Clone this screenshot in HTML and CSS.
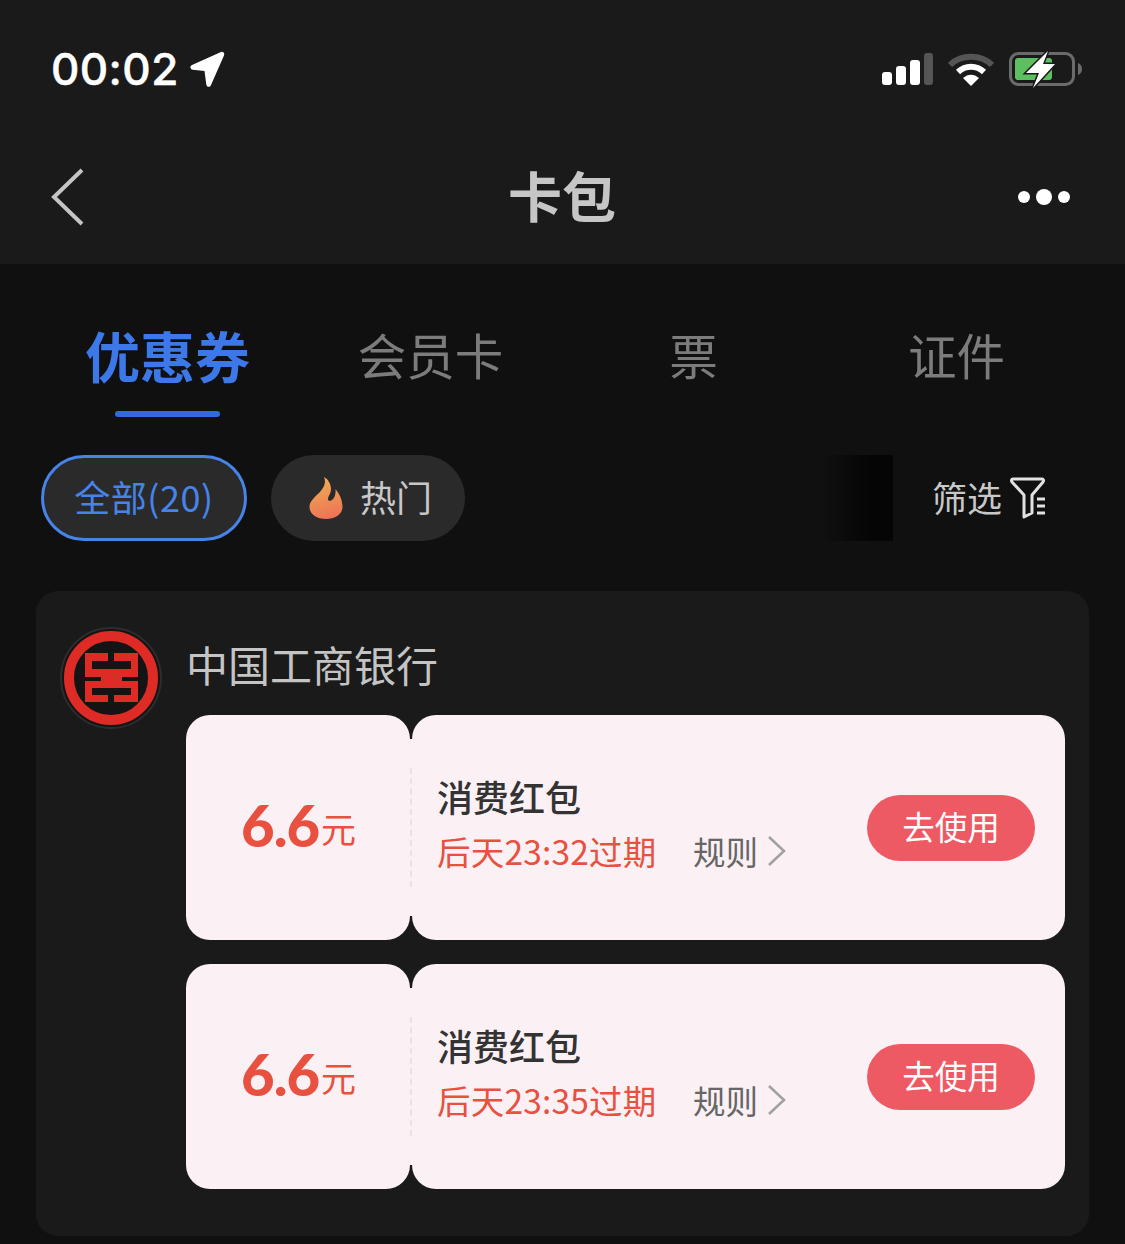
FILE: index.html
```html
<!DOCTYPE html>
<html lang="zh-CN">
<head>
    <meta charset="UTF-8">
    <meta name="viewport" content="width=device-width, initial-scale=1.0">
    <title>卡包</title>
    <link rel="stylesheet" href="styles.css">
</head>
<body>

<header class="top">
    <div class="status">
        <div class="status-left">
            <span class="time">00:02</span>
            <svg class="loc" width="36" height="36" viewBox="0 0 36 36"><path d="M32 1 3 14c-2.500 1.200-2 4.500.8 4.800L15.500 20l1.800 13.500c.4 2.700 3.600 3.100 4.600.8L35 4.500C35.900 2.200 34 .1 32 1z" fill="#fff"/></svg>
        </div>
        <div class="status-right">
            <svg width="52" height="34" viewBox="0 0 52 34">
                <rect x="1" y="20" width="10" height="13" rx="3" fill="#fff"/>
                <rect x="15" y="14" width="10" height="19" rx="3" fill="#fff"/>
                <rect x="29" y="8" width="10" height="25" rx="3" fill="#fff"/>
                <rect x="43" y="1" width="9" height="32" rx="3" fill="#555"/>
            </svg>
            <svg width="46" height="34" viewBox="0 0 46 34">
                <path d="M2 13C13 2 33 2 44 13" fill="none" stroke="#555" stroke-width="6"/>
                <path d="M10 20c7.500-7 18.500-7 26 0" fill="none" stroke="#fff" stroke-width="6"/>
                <path d="M15 26c5-4.500 11-4.500 16 0l-8 8z" fill="#fff"/>
            </svg>
            <svg width="74" height="38" viewBox="0 0 74 38">
                <rect x="1.500" y="3.500" width="63" height="31" rx="8" fill="none" stroke="#6b6b6b" stroke-width="3"/>
                <rect x="6" y="8" width="37" height="22" rx="3" fill="#5cc060"/>
                <path d="M69 13c3 1 4 3.500 4 6s-1 5-4 6z" fill="#6b6b6b"/>
                <path class="bolt" d="M39 1 17 23h13l-6 15 22-24H34z"/>
            </svg>
        </div>
    </div>
    <nav class="nav">
        <svg width="36" height="60" viewBox="0 0 36 60"><path d="M32 3 4 30l28 27" fill="none" stroke="#c4c4c4" stroke-width="4"/></svg>
        <h1 class="nav-title">卡包</h1>
        <div class="more"><i></i><i class="mid"></i><i></i></div>
    </nav>
</header>

<div class="tabs">
    <div class="tab active">优惠券</div>
    <div class="tab">会员卡</div>
    <div class="tab">票</div>
    <div class="tab">证件</div>
</div>

<div class="filters">
    <div class="pill selected">全部(20)</div>
    <div class="pill hot">
        <svg width="34" height="44" viewBox="0 0 34 44">
            <defs><linearGradient id="flame" x1="0.300" y1="0" x2="0.500" y2="1"><stop offset="0" stop-color="#eeb055"/><stop offset="1" stop-color="#ee7355"/></linearGradient></defs>
            <path d="M15 1c2 5 1 9-4 15C6 21 .5 25 .5 31c0 7 7 12 16.500 12s16.500-5 16.500-12c0-7-3-13-7-18 .5 5-1 9-3.500 11-2 1.500-4 1-4-1 0-3 3-5 3-10C22 8 19 3 15 1z" fill="url(#flame)"/>
        </svg>
        <span>热门</span>
    </div>
    <div class="fade"></div>
    <div class="screen">
        <span>筛选</span>
        <svg width="38" height="42" viewBox="0 0 38 42">
            <path d="M4 2h29c1.500 0 2 1.500 1 3L23 18v18l-8 4V18L3 5C2 3.500 2.500 2 4 2z" fill="none" stroke="#e2e2e2" stroke-width="3" stroke-linejoin="round"/>
            <path d="M28 22h8M28 29h8M28 36h8" stroke="#e2e2e2" stroke-width="3"/>
        </svg>
    </div>
</div>

<section class="bank">
    <svg width="102" height="102" viewBox="0 0 102 102">
        <circle cx="51" cy="51" r="50" fill="#141414" stroke="#2d2d2d" stroke-width="2"/>
        <circle cx="51" cy="51" r="42" fill="none" stroke="#df2b26" stroke-width="10"/>
        <g fill="#df2b26">
            <rect x="25" y="26" width="23" height="8"/>
            <rect x="54" y="26" width="24" height="8"/>
            <rect x="25" y="26" width="7" height="24"/>
            <rect x="71" y="26" width="7" height="24"/>
            <rect x="25" y="42" width="53" height="8"/>
            <rect x="41" y="42" width="21" height="19"/>
            <rect x="25" y="54" width="53" height="7"/>
            <rect x="25" y="54" width="7" height="21"/>
            <rect x="71" y="54" width="7" height="21"/>
            <rect x="25" y="68" width="23" height="7"/>
            <rect x="54" y="68" width="24" height="7"/>
        </g>
        <path d="M25 50.500h16v3H25zM62 50.500h16v3H62z" fill="#141414"/>
    </svg>
    <div class="bank-body">
        <div class="bank-name">中国工商银行</div>

        <div class="ticket">
            <div class="stub"><b>6.6</b><span>元</span></div>
            <div class="joint"></div>
            <div class="main">
                <div class="info">
                    <div class="name">消费红包</div>
                    <div class="line">
                        <span class="expire">后天23:32过期</span>
                        <span class="rule">规则</span>
                        <svg width="20" height="32" viewBox="0 0 20 32"><path d="M2 2l15 14L2 30" fill="none" stroke="#a0a0a0" stroke-width="2.500"/></svg>
                    </div>
                </div>
                <div class="use">去使用</div>
            </div>
        </div>

        <div class="ticket">
            <div class="stub"><b>6.6</b><span>元</span></div>
            <div class="joint"></div>
            <div class="main">
                <div class="info">
                    <div class="name">消费红包</div>
                    <div class="line">
                        <span class="expire">后天23:35过期</span>
                        <span class="rule">规则</span>
                        <svg width="20" height="32" viewBox="0 0 20 32"><path d="M2 2l15 14L2 30" fill="none" stroke="#a0a0a0" stroke-width="2.500"/></svg>
                    </div>
                </div>
                <div class="use">去使用</div>
            </div>
        </div>
    </div>
</section>

</body>
</html>
```

FILE: styles.css
```css
body {
    margin: 0;
    height: 1244px;
    overflow: hidden;
    background: #101010;
    font-family: "Noto Sans CJK SC", "Liberation Sans", sans-serif;
    color: #fff;
}
svg { display: block; flex: none; }

.top {
    height: 264px;
    background: #1a1a1a;
}
.status {
    height: 130px;
    padding: 8px 42px 0 51px;
    box-sizing: border-box;
    display: flex;
    justify-content: space-between;
    align-items: center;
}
.status-left { display: flex; align-items: center; gap: 10px; }
.time {
    font-family: Inter, sans-serif;
    font-size: 44px;
    font-weight: 500;
    letter-spacing: 0.4px;
    -webkit-text-stroke: 0.5px #fff;
}
.status-right { display: flex; align-items: center; gap: 15px; }
.bolt {
    fill: #fff;
    stroke: #1a1a1a;
    stroke-width: 3;
    paint-order: stroke;
}

.nav {
    height: 134px;
    padding: 0 55px 0 50px;
    display: grid;
    grid-template-columns: 1fr auto 1fr;
    align-items: center;
}
.nav-title {
    margin: 0 0 4px 4px;
    font-size: 54px;
    line-height: 70px;
    font-weight: 700;
    color: #c6c6c6;
}
.more { display: flex; align-items: center; justify-content: flex-end; gap: 6px; }
.more i { width: 12px; height: 12px; border-radius: 50%; background: #fff; }
.more i.mid { width: 16px; height: 16px; }

.tabs {
    display: grid;
    grid-template-columns: repeat(4, 263px);
    margin: 0 36px;
    padding-top: 53px;
    height: 100px;
}
.tab {
    position: relative;
    text-align: center;
    font-size: 48.500px;
    line-height: 74px;
    color: #7c7c7c;
}
.tab.active {
    font-size: 55px;
    font-weight: 700;
    color: #3d78e8;
}
.tab.active::after {
    content: "";
    position: absolute;
    left: 79px;
    top: 94px;
    width: 105px;
    height: 6px;
    border-radius: 3px;
    background: #2f6ae0;
}

.filters {
    display: flex;
    align-items: center;
    margin: 38px 0 50px 41px;
    height: 86px;
}
.pill {
    height: 86px;
    box-sizing: border-box;
    border-radius: 43px;
    background: #2a2a2a;
    display: flex;
    align-items: center;
    font-size: 36px;
    color: #c8c8c8;
}
.pill.selected {
    width: 206px;
    padding-bottom: 4px;
    justify-content: center;
    border: 3px solid #4684ea;
    color: #4684ea;
    letter-spacing: 0.5px;
}
.pill.hot {
    width: 194px;
    margin-left: 24px;
    padding-left: 38px;
    gap: 17px;
}
.pill.hot span { margin-bottom: 4px; }
.fade {
    width: 73px;
    height: 86px;
    margin-left: 355px;
    background: linear-gradient(to right, #101010, #050505 70%);
}
.screen {
    display: flex;
    align-items: center;
    gap: 7px;
    margin-left: 39px;
    font-size: 35px;
    color: #c8c8c8;
}
.screen span { margin-bottom: 4px; }

.bank {
    margin: 0 36px;
    height: 645px;
    box-sizing: border-box;
    padding: 36px 24px 47px;
    border-radius: 22px;
    background: #1a1a1a;
    display: flex;
    gap: 24px;
}
.bank-body { flex: 1; min-width: 0; }
.bank-name {
    height: 88px;
    font-size: 42px;
    line-height: 74px;
    color: #c4c4c4;
}

.ticket {
    display: flex;
    height: 225px;
    margin-bottom: 24px;
}
.stub {
    width: 224px;
    box-sizing: border-box;
    padding: 0 0 6px 55px;
    border-radius: 24px;
    background: #fbf1f5;
    color: #e8503f;
    display: flex;
    align-items: center;
}
.stub b {
    font-family: Lato, sans-serif;
    font-size: 58px;
    font-weight: 900;
    letter-spacing: -1px;
}
.stub span { margin: 6px 0 0 2px; font-size: 35px; }
.joint {
    width: 2px;
    margin: 24px 0;
    background: #fbf1f5;
    position: relative;
}
.joint::after {
    content: "";
    position: absolute;
    left: 0;
    top: 29px;
    bottom: 29px;
    border-left: 2px dashed #f2dde2;
}
.main {
    flex: 1;
    box-sizing: border-box;
    padding: 0 30px 0 25px;
    border-radius: 24px;
    background: #fbf1f5;
    display: flex;
    align-items: center;
    justify-content: space-between;
}
.info { margin-top: -9px; }
.name {
    font-size: 36px;
    line-height: 55px;
    font-weight: 500;
    color: #333;
}
.line { display: flex; align-items: center; }
.expire { width: 256px; font-size: 33.500px; letter-spacing: 0.2px; line-height: 54px; color: #e8503f; }
.rule { font-size: 32.500px; line-height: 54px; color: #666; margin-right: 9px; }
.use {
    width: 168px;
    height: 66px;
    border-radius: 33px;
    background: #ee5a64;
    text-align: center;
    font-size: 32.500px;
    line-height: 62px;
}
```
